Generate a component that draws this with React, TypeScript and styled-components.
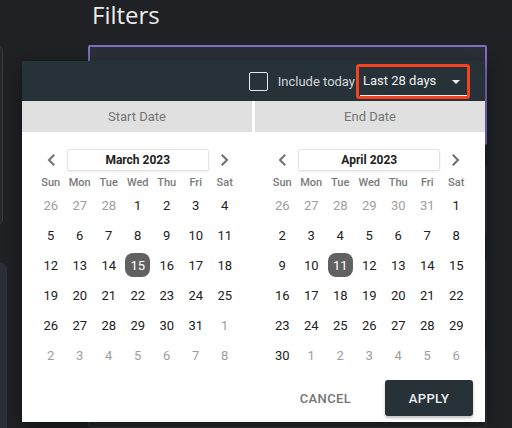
import React from "react";
import styled, { createGlobalStyle } from "styled-components";

const Global = createGlobalStyle`
  html, body { margin: 0; padding: 0; background: #202125; width: 512px; height: 428px; overflow: hidden; }
  * { box-sizing: border-box; }
`;

const Page = styled.div`
  position: relative;
  display: flex;
  height: 428px;
  width: 512px;
  overflow: hidden;
  background: #202125;
`;

const LeftRail = styled.div`
  flex: none;
  width: 7px;
  margin-right: 81px;
  display: flex;
  flex-direction: column;
`;

const RailCard = styled.div<{ $visible: number; $mt: number; $h: number; $bg: string; $border: string }>`
  flex: none;
  width: 200px;
  margin-left: ${(p) => p.$visible - 200}px;
  margin-top: ${(p) => p.$mt}px;
  height: ${(p) => p.$h}px;
  background: ${(p) => p.$bg};
  border: 1px solid ${(p) => p.$border};
  border-radius: 6px;
`;

const Main = styled.div`
  flex: none;
  width: 399px;
  display: flex;
  flex-direction: column;
  padding-top: 2px;
`;

const Title = styled.h1`
  margin: 0;
  padding-left: 4px;
  font-family: "Open Sans", sans-serif;
  font-weight: 400;
  font-size: 24px;
  line-height: 30px;
  margin-top: -2px;
  color: #ececec;
`;

const DateBox = styled.div`
  margin-top: 15px;
  height: 140px;
  border: 2px solid #7e6fc0;
  border-radius: 2px;
  background: #2c2f38;
`;

const FieldCard = styled.div<{ $mt: number; $h: number }>`
  flex: none;
  margin-top: ${(p) => p.$mt}px;
  height: ${(p) => p.$h}px;
  border: 1px solid rgba(255, 255, 255, 0.07);
  border-radius: 4px;
  background: #24262b;
  padding: 21px 0 0 34px;
`;

const FieldLabel = styled.div`
  font-family: "Open Sans", sans-serif;
  font-size: 18px;
  line-height: 24px;
  color: #d6d6d6;
`;

const Popover = styled.div`
  position: absolute;
  left: 22px;
  top: 61px;
  width: 463px;
  background: #ffffff;
  box-shadow: 0 4px 16px rgba(0, 0, 0, 0.45);
  font-family: Roboto, "Liberation Sans", sans-serif;
  display: flex;
  flex-direction: column;
`;

const Header = styled.div`
  height: 40px;
  background: #263238;
  display: flex;
  align-items: center;
  justify-content: flex-end;
  padding-right: 17px;
`;

const Checkbox = styled.div`
  width: 19px;
  height: 19px;
  border: 1.5px solid #e6e8ea;
  border-radius: 2px;
`;

const CheckLabel = styled.span`
  margin-left: 10px;
  font-size: 13px;
  color: #d3d7d9;
  white-space: nowrap;
`;

const Select = styled.div`
  position: relative;
  margin-left: 5px;
  width: 108px;
  height: 30px;
  display: flex;
  align-items: center;
  padding-left: 3px;
  border-bottom: 1px solid #e6e8ea;
  font-size: 13px;
  color: #eef0f1;
`;

const SelectArrow = styled.svg`
  margin-left: auto;
  margin-right: 8px;
  margin-top: 2px;
`;

const Highlight = styled.div`
  position: absolute;
  left: -4px;
  right: -2px;
  top: -2px;
  bottom: -4px;
  border: 3px solid #f2421f;
  border-radius: 3px;
  pointer-events: none;
`;

const Tabs = styled.div`
  display: grid;
  grid-template-columns: 1fr 1fr;
  column-gap: 3px;
`;

const Tab = styled.div`
  height: 31px;
  background: #e0e0e0;
  display: flex;
  align-items: center;
  justify-content: center;
  font-size: 13px;
  color: #757575;
`;

const Body = styled.div`
  display: grid;
  grid-template-columns: 1fr 1fr;
`;

const CalColumn = styled.div`
  display: flex;
  flex-direction: column;
  align-items: center;
  padding-top: 17px;
`;

const Nav = styled.div`
  display: flex;
  align-items: center;
  height: 22px;
`;

const NavButton = styled.div`
  width: 32px;
  height: 22px;
  display: flex;
  align-items: center;
  justify-content: center;
`;

const MonthBox = styled.div`
  width: 142px;
  height: 22px;
  border: 1px solid #e3e3e3;
  border-radius: 2px;
  box-shadow: 0 1px 2px rgba(0, 0, 0, 0.08);
  display: flex;
  align-items: center;
  justify-content: center;
  font-size: 12px;
  font-weight: 700;
  color: #212121;
`;

const Grid = styled.div`
  display: grid;
  grid-template-columns: repeat(7, 29px);
`;

const WeekGrid = styled(Grid)`
  margin-top: 5px;
`;

const WeekDay = styled.div`
  height: 14px;
  line-height: 14px;
  text-align: center;
  font-size: 11px;
  font-weight: 500;
  color: #7a7a7a;
`;

const DayCell = styled.div`
  height: 30px;
  display: flex;
  align-items: center;
  justify-content: center;
`;

const DayMark = styled.div<{ $muted: boolean; $selected: boolean }>`
  width: 25px;
  height: 24px;
  border-radius: 8px;
  display: flex;
  align-items: center;
  justify-content: center;
  font-size: 13px;
  background: ${(p) => (p.$selected ? "#616161" : "transparent")};
  color: ${(p) => (p.$selected ? "#ffffff" : p.$muted ? "#9e9e9e" : "#212121")};
`;

const Footer = styled.div`
  display: flex;
  justify-content: flex-end;
  align-items: center;
  padding: 10px 12px 6px 0;
`;

const TextButton = styled.div`
  width: 81px;
  height: 36px;
  margin-right: 19px;
  display: flex;
  align-items: center;
  justify-content: center;
  font-size: 13px;
  font-weight: 500;
  letter-spacing: 0.4px;
  color: #757575;
`;

const PrimaryButton = styled.div`
  width: 88px;
  height: 36px;
  border-radius: 3px;
  background: #263238;
  box-shadow: 0 2px 3px rgba(0, 0, 0, 0.25);
  display: flex;
  align-items: center;
  justify-content: center;
  font-size: 13px;
  font-weight: 500;
  letter-spacing: 0.4px;
  color: #eceff1;
`;

const Chevron = ({ dir }: { dir: "left" | "right" }) => (
  <svg width="10" height="14" viewBox="0 0 10 14">
    <path
      fill="none"
      stroke="#6f6f6f"
      strokeWidth="2"
      strokeLinecap="square"
      d={dir === "left" ? "M7.5 2.5 L3 7 L7.5 11.5" : "M2.5 2.5 L7 7 L2.5 11.5"}
    />
  </svg>
);

type Day = { n: number; muted: boolean };

function buildDays(prevStart: number, prevEnd: number, monthLen: number): Day[] {
  const out: Day[] = [];
  for (let d = prevStart; d <= prevEnd; d++) out.push({ n: d, muted: true });
  for (let d = 1; d <= monthLen; d++) out.push({ n: d, muted: false });
  let nx = 1;
  while (out.length < 42) out.push({ n: nx++, muted: true });
  return out;
}

const WEEK = ["Sun", "Mon", "Tue", "Wed", "Thu", "Fri", "Sat"];

const Calendar = ({ title, days, selected }: { title: string; days: Day[]; selected: number }) => (
  <CalColumn>
    <Nav>
      <NavButton>
        <Chevron dir="left" />
      </NavButton>
      <MonthBox>{title}</MonthBox>
      <NavButton>
        <Chevron dir="right" />
      </NavButton>
    </Nav>
    <WeekGrid>
      {WEEK.map((w) => (
        <WeekDay key={w}>{w}</WeekDay>
      ))}
    </WeekGrid>
    <Grid>
      {days.map((d, i) => (
        <DayCell key={i}>
          <DayMark $muted={d.muted} $selected={!d.muted && d.n === selected}>
            {d.n}
          </DayMark>
        </DayCell>
      ))}
    </Grid>
  </CalColumn>
);

export default function App() {
  const march = buildDays(26, 28, 31);
  const april = buildDays(26, 31, 30);
  return (
    <>
      <Global />
      <Page>
        <LeftRail>
          <RailCard $visible={3} $mt={45} $h={180} $bg="#26272c" $border="#393a40" />
          <RailCard $visible={7} $mt={38} $h={200} $bg="#2b2e36" $border="#2e3139" />
        </LeftRail>
        <Main>
          <Title>Filters</Title>
          <DateBox />
          <FieldCard $mt={20} $h={71} />
          <FieldCard $mt={23} $h={62} />
          <FieldCard $mt={27} $h={80}>
            <FieldLabel>Campaign Name</FieldLabel>
          </FieldCard>
        </Main>
        <Popover>
          <Header>
            <Checkbox />
            <CheckLabel>Include today</CheckLabel>
            <Select>
              Last 28 days
              <SelectArrow width="8" height="4" viewBox="0 0 8 4">
                <polygon points="0,0 8,0 4,4" fill="#eef0f1" />
              </SelectArrow>
              <Highlight />
            </Select>
          </Header>
          <Tabs>
            <Tab>Start Date</Tab>
            <Tab>End Date</Tab>
          </Tabs>
          <Body>
            <Calendar title="March 2023" days={march} selected={15} />
            <Calendar title="April 2023" days={april} selected={11} />
          </Body>
          <Footer>
            <TextButton>CANCEL</TextButton>
            <PrimaryButton>APPLY</PrimaryButton>
          </Footer>
        </Popover>
      </Page>
    </>
  );
}
